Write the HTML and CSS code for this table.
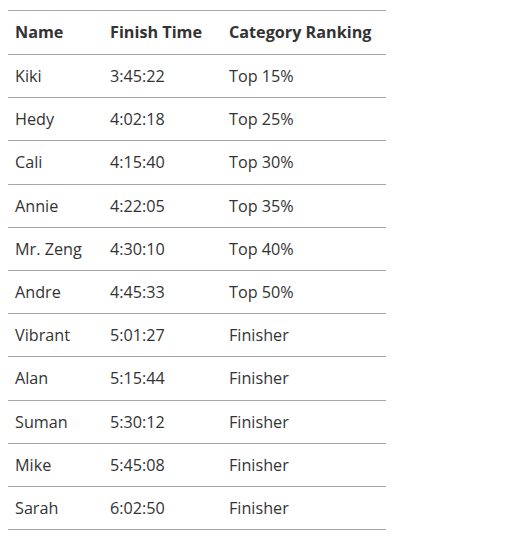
FILE: index.html
```html
<!DOCTYPE html>
<html>
<head>
<meta charset="utf-8">
<link rel="stylesheet" href="styles.css">
</head>
<body>
<table class="results">
  <colgroup>
    <col class="c-name">
    <col class="c-time">
    <col class="c-rank">
  </colgroup>
  <thead>
    <tr><th>Name</th><th>Finish Time</th><th>Category Ranking</th></tr>
  </thead>
  <tbody>
    <tr><td>Kiki</td><td>3:45:22</td><td>Top 15%</td></tr>
    <tr><td>Hedy</td><td>4:02:18</td><td>Top 25%</td></tr>
    <tr><td>Cali</td><td>4:15:40</td><td>Top 30%</td></tr>
    <tr><td>Annie</td><td>4:22:05</td><td>Top 35%</td></tr>
    <tr><td>Mr. Zeng</td><td>4:30:10</td><td>Top 40%</td></tr>
    <tr><td>Andre</td><td>4:45:33</td><td>Top 50%</td></tr>
    <tr><td>Vibrant</td><td>5:01:27</td><td>Finisher</td></tr>
    <tr><td>Alan</td><td>5:15:44</td><td>Finisher</td></tr>
    <tr><td>Suman</td><td>5:30:12</td><td>Finisher</td></tr>
    <tr><td>Mike</td><td>5:45:08</td><td>Finisher</td></tr>
    <tr><td>Sarah</td><td>6:02:50</td><td>Finisher</td></tr>
  </tbody>
</table>
</body>
</html>
```

FILE: styles.css
```css
html, body {
  margin: 0;
  background: #fff;
}
body {
  padding: 10px 8px;
  font-family: "Open Sans", "Noto Sans", sans-serif;
  font-size: 16.2px;
  color: #333;
}
.results {
  border-collapse: collapse;
  table-layout: fixed;
  width: 378px;
}
.c-name { width: 95px; }
.c-time { width: 119px; }
.c-rank { width: 164px; }
.results th,
.results td {
  text-align: left;
  padding: 9.1px 7px;
  line-height: 24px;
  border-top: 1px solid #a6a6a6;
  border-bottom: 1px solid #a6a6a6;
  white-space: nowrap;
}
.results th {
  font-weight: 700;
  color: #333;
  padding-top: 9px;
  padding-bottom: 10px;
}
```
